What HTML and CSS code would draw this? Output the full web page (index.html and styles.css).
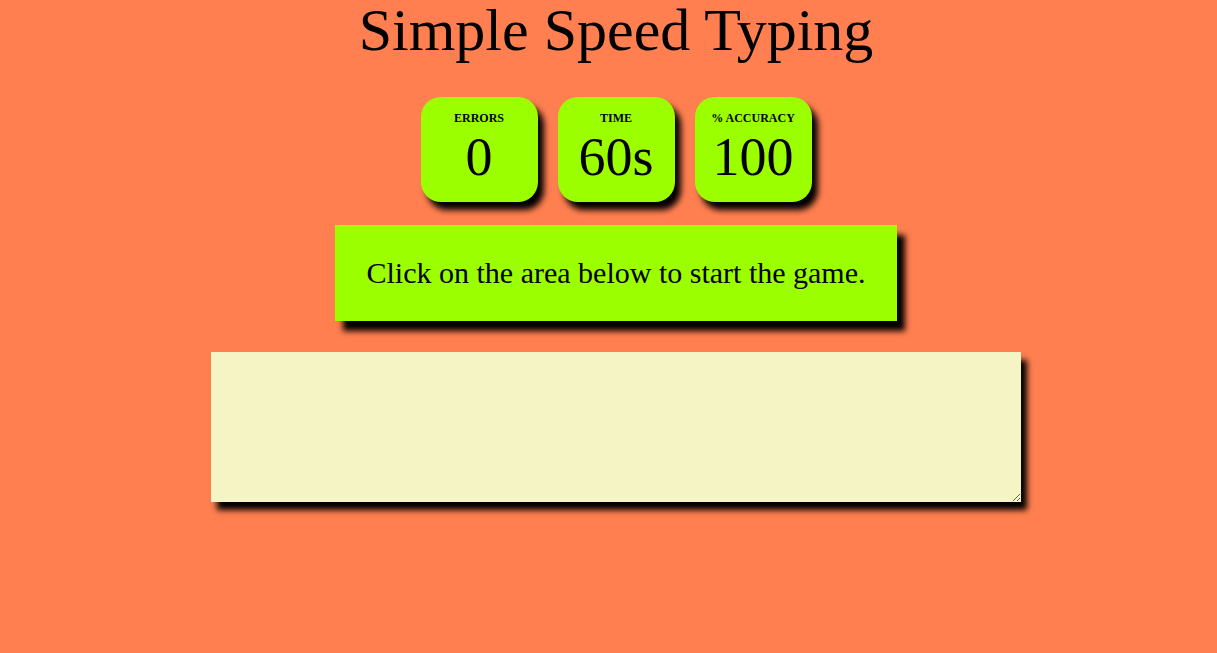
FILE: index.html
```html
<!DOCTYPE html>
<html>
<head>
<meta charset="utf-8">
<title>Simple Speed Typing</title>
<link rel="stylesheet" href="styles.css">
</head>
<body>
<div class="container">
  <h1 class="heading">Simple Speed Typing</h1>
  <div class="stats">
    <div class="stat">
      <div class="stat-label">ERRORS</div>
      <div class="stat-value">0</div>
    </div>
    <div class="stat">
      <div class="stat-label">TIME</div>
      <div class="stat-value">60s</div>
    </div>
    <div class="stat">
      <div class="stat-label">% ACCURACY</div>
      <div class="stat-value">100</div>
    </div>
  </div>
  <div class="quote">Click on the area below to start the game.</div>
  <div class="input-wrap">
    <textarea class="input-area"></textarea>
  </div>
</div>
</body>
</html>
```
FILE: styles.css
```css
html, body {
  background: #ff7f50;
}
body {
  margin: 0 0 0 15px;
  font-family: "Liberation Serif", "Times New Roman", serif;
  color: #000;
}
.container {
  display: flex;
  flex-direction: column;
  align-items: center;
  padding-bottom: 40px;
}
.heading {
  font-size: 60px;
  font-weight: normal;
  margin: 0;
  line-height: 60px;
}
.stats {
  display: flex;
  gap: 20px;
  margin-top: 37px;
}
.stat {
  width: 117px;
  height: 105px;
  background: #9cff00;
  border-radius: 20px;
  box-shadow: 6px 8px 6px #000;
  display: flex;
  flex-direction: column;
  align-items: center;
  padding-top: 15px;
  box-sizing: border-box;
}
.stat-label {
  font-size: 12px;
  font-weight: bold;
  line-height: 12px;
}
.stat-value {
  font-size: 54px;
  line-height: 66px;
}
.quote {
  margin-top: 23px;
  width: 562px;
  height: 96px;
  box-sizing: border-box;
  background: #9cff00;
  box-shadow: 8px 10px 6px #000;
  display: flex;
  align-items: center;
  justify-content: center;
  font-size: 30px;
}
.input-wrap {
  margin-top: 31px;
  width: 810px;
  height: 150px;
  box-shadow: 6px 8px 6px #000;
  display: flex;
}
.input-area {
  flex: 1;
  margin: 0;
  box-sizing: border-box;
  background: #f5f4c5;
  border: none;
  outline: none;
  padding: 8px;
  font-family: inherit;
}
```
